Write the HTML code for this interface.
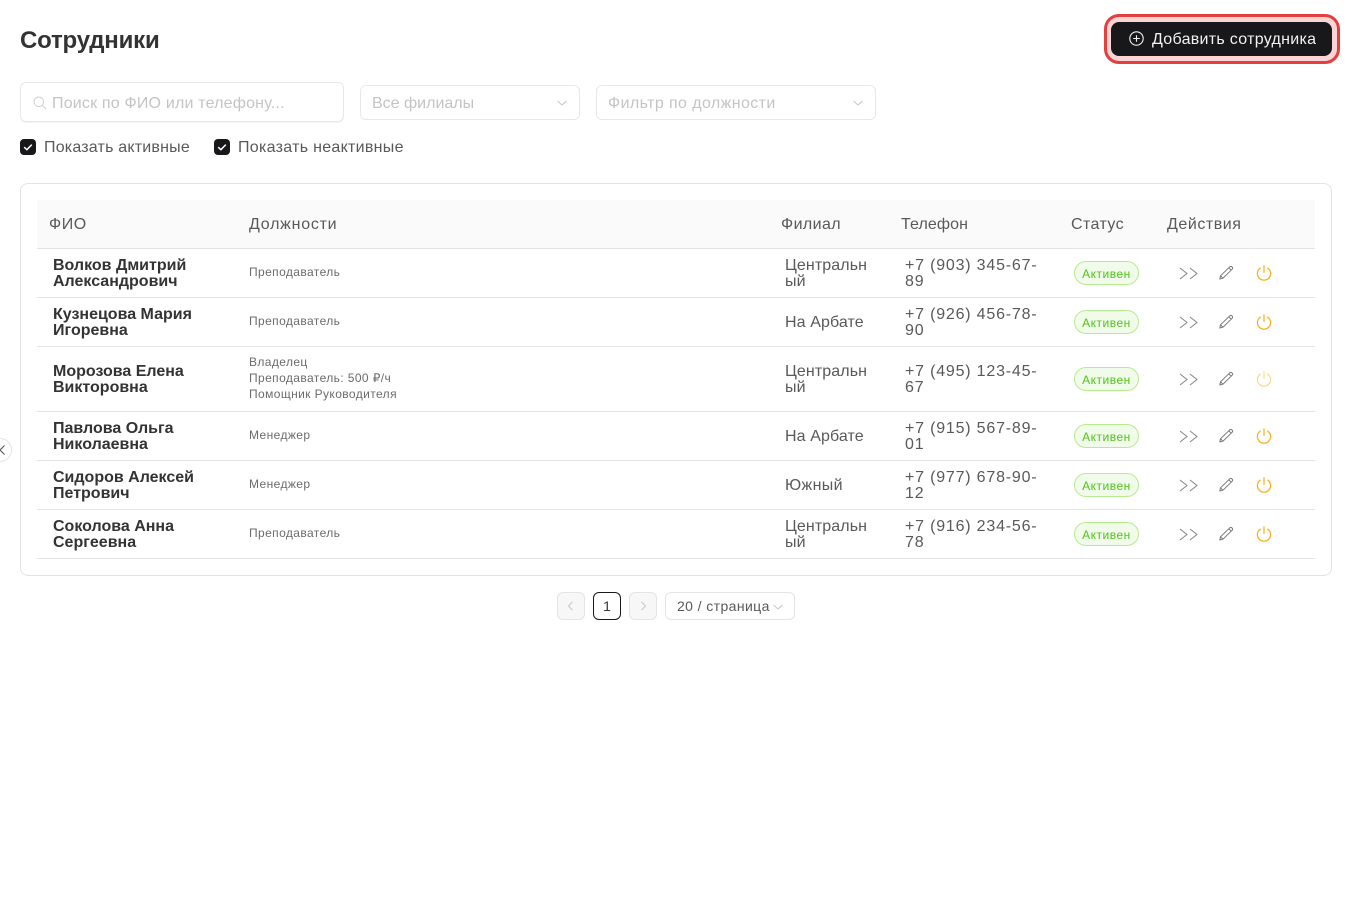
<!DOCTYPE html>
<html lang="ru"><head><meta charset="utf-8"><title>Сотрудники</title>
<style>
html,body{margin:0;padding:0;background:#fff;width:1352px;height:900px;overflow:hidden;font-family:"Liberation Sans","Noto Sans CJK SC",sans-serif}
.t{position:absolute;white-space:nowrap;line-height:16px;font-size:16px;color:#595959;letter-spacing:.3px;transform:translateY(1px)}
.b{position:absolute;box-sizing:border-box}
.name{color:#333;font-weight:700;letter-spacing:0;font-size:16px}
.role{font-size:12px;color:#6b6b6b;letter-spacing:.4px}
.fil{letter-spacing:.1px}
.tel{letter-spacing:.8px}
.line{position:absolute;left:37px;width:1278px;height:1px;background:#e3e3e3}
.ph{color:#c4c4c4}
.tag{position:absolute;left:1074px;width:65px;height:24px;box-sizing:border-box;border:1px solid #b7eb8f;background:#f0fbe9;border-radius:12px;color:#52c41a;font-size:12px;line-height:24px;text-align:center;letter-spacing:.5px}
svg{position:absolute;overflow:visible}
</style></head><body>
<svg width="0" height="0" style="position:absolute"><defs>
<symbol id="fw" viewBox="0 0 20 14"><path d="M2 1 9 6.500 2 12M12 1 19 6.500 12 12" fill="none" stroke="#858585" stroke-width="1"/></symbol>
<symbol id="ed" viewBox="0 0 16 16"><path d="M.8 14 1.500 10.800 10.800 1.800Q11.800 1 12.800 1.800L13.400 2.400Q14 3.400 13.200 4.200L4 13.200ZM1.500 10.800 4 13.200M9.800 2.800 12.300 5.200" fill="none" stroke="#777" stroke-width="1" stroke-linejoin="round"/></symbol>
<symbol id="pw" viewBox="0 0 16 16"><path d="M4.300 3.100A6.600 6.600 0 1 0 11.700 3.100M8 .8V7.400" fill="none" stroke="currentColor" stroke-width="1.200" stroke-linecap="round"/></symbol>
<symbol id="chk" viewBox="0 0 16 16"><rect width="16" height="16" rx="4" fill="#18181b"/><path d="M4.200 8.200 6.900 10.700 11.800 5.600" fill="none" stroke="#fff" stroke-width="1.500"/></symbol>
<symbol id="dn" viewBox="0 0 12 8"><path d="M1.500 2 6 6 10.500 2" fill="none" stroke="#c4c4c4" stroke-width="1"/></symbol>
</defs></svg>

<div class="t" style="left:20px;top:26px;font-size:24px;line-height:28px;font-weight:700;color:#333;letter-spacing:-.2px">Сотрудники</div>

<div class="b" style="left:1104px;top:14px;width:236px;height:50px;border:3px solid #e53e3e;border-radius:15px;background:#fbd5d5"></div>
<div class="b" style="left:1111px;top:22px;width:221px;height:34px;border-radius:8px;background:#18181b"></div>
<svg style="left:1129px;top:31px" width="15" height="15" viewBox="0 0 15 15"><circle cx="7.500" cy="7.500" r="6.700" fill="none" stroke="#f2f2f2" stroke-width="1.100"/><path d="M7.500 4.200V10.800M4.200 7.500H10.800" stroke="#f2f2f2" stroke-width="1.100"/></svg>
<div class="t" style="left:1152px;top:31px;color:#f2f2f2;letter-spacing:.29px">Добавить сотрудника</div>

<div class="b" style="left:20px;top:82px;width:324px;height:40px;border:1px solid #e8e8e8;border-radius:6px;box-shadow:0 1px 0 #f4f4f4"></div>
<svg style="left:33px;top:96px" width="14" height="14" viewBox="0 0 14 14"><circle cx="5.800" cy="5.800" r="4.800" fill="none" stroke="#cfcfcf" stroke-width="1"/><path d="M9.300 9.300 13 13" stroke="#cfcfcf" stroke-width="1"/></svg>
<div class="t ph" style="left:52px;top:95px;letter-spacing:.19px">Поиск по ФИО или телефону...</div>

<div class="b" style="left:360px;top:85px;width:220px;height:35px;border:1px solid #e8e8e8;border-radius:6px"></div>
<div class="t ph" style="left:372px;top:95px;letter-spacing:0">Все филиалы</div>
<svg style="left:556px;top:99px" width="12" height="8"><use href="#dn"/></svg>

<div class="b" style="left:596px;top:85px;width:280px;height:35px;border:1px solid #e8e8e8;border-radius:6px"></div>
<div class="t ph" style="left:608px;top:95px;letter-spacing:.4px">Фильтр по должности</div>
<svg style="left:852px;top:99px" width="12" height="8"><use href="#dn"/></svg>

<svg style="left:20px;top:139px" width="16" height="16"><use href="#chk"/></svg>
<div class="t" style="left:44px;top:139px;letter-spacing:.2px">Показать активные</div>
<svg style="left:214px;top:139px" width="16" height="16"><use href="#chk"/></svg>
<div class="t" style="left:238px;top:139px;letter-spacing:.29px">Показать неактивные</div>

<div class="b" style="left:20px;top:183px;width:1312px;height:393px;border:1px solid #e3e3e3;border-radius:8px"></div>
<div class="b" style="left:37px;top:200px;width:1278px;height:48px;background:#fafafa"></div>
<div class="t" style="left:49px;top:216px;letter-spacing:.55px">ФИО</div>
<div class="t" style="left:249px;top:216px;letter-spacing:.75px">Должности</div>
<div class="t" style="left:781px;top:216px;letter-spacing:.4px">Филиал</div>
<div class="t" style="left:901px;top:216px;letter-spacing:.1px">Телефон</div>
<div class="t" style="left:1071px;top:216px;letter-spacing:.4px">Статус</div>
<div class="t" style="left:1167px;top:216px;letter-spacing:.55px">Действия</div>
<div class="line" style="top:248px"></div><div class="line" style="top:297px"></div><div class="line" style="top:346px"></div><div class="line" style="top:411px"></div><div class="line" style="top:460px"></div><div class="line" style="top:509px"></div><div class="line" style="top:558px"></div>

<!-- row 1 -->
<div class="t name" style="left:53px;top:257px">Волков Дмитрий<br>Александрович</div>
<div class="t role" style="left:249px;top:263px">Преподаватель</div>
<div class="t fil" style="left:785px;top:257px">Центральн<br>ый</div>
<div class="t tel" style="left:905px;top:257px">+7 (903) 345-67-<br>89</div>
<div class="tag" style="top:261px">Активен</div>
<svg style="left:1178px;top:267px" width="20" height="14"><use href="#fw"/></svg><svg style="left:1219px;top:265px" width="16" height="16"><use href="#ed"/></svg><svg style="left:1256px;top:265px;color:#faad14" width="16" height="16"><use href="#pw"/></svg>

<!-- row 2 -->
<div class="t name" style="left:53px;top:306px">Кузнецова Мария<br>Игоревна</div>
<div class="t role" style="left:249px;top:312px">Преподаватель</div>
<div class="t fil" style="left:785px;top:314px">На Арбате</div>
<div class="t tel" style="left:905px;top:306px">+7 (926) 456-78-<br>90</div>
<div class="tag" style="top:310px">Активен</div>
<svg style="left:1178px;top:316px" width="20" height="14"><use href="#fw"/></svg><svg style="left:1219px;top:314px" width="16" height="16"><use href="#ed"/></svg><svg style="left:1256px;top:314px;color:#faad14" width="16" height="16"><use href="#pw"/></svg>

<!-- row 3 -->
<div class="t name" style="left:53px;top:363px">Морозова Елена<br>Викторовна</div>
<div class="t role" style="left:249px;top:353px">Владелец<br>Преподаватель: 500 ₽/ч<br>Помощник Руководителя</div>
<div class="t fil" style="left:785px;top:363px">Центральн<br>ый</div>
<div class="t tel" style="left:905px;top:363px">+7 (495) 123-45-<br>67</div>
<div class="tag" style="top:367px">Активен</div>
<svg style="left:1178px;top:373px" width="20" height="14"><use href="#fw"/></svg><svg style="left:1219px;top:371px" width="16" height="16"><use href="#ed"/></svg><svg style="left:1256px;top:371px;color:#fdd58a" width="16" height="16"><use href="#pw"/></svg>

<!-- row 4 -->
<div class="t name" style="left:53px;top:420px">Павлова Ольга<br>Николаевна</div>
<div class="t role" style="left:249px;top:426px">Менеджер</div>
<div class="t fil" style="left:785px;top:428px">На Арбате</div>
<div class="t tel" style="left:905px;top:420px">+7 (915) 567-89-<br>01</div>
<div class="tag" style="top:424px">Активен</div>
<svg style="left:1178px;top:430px" width="20" height="14"><use href="#fw"/></svg><svg style="left:1219px;top:428px" width="16" height="16"><use href="#ed"/></svg><svg style="left:1256px;top:428px;color:#faad14" width="16" height="16"><use href="#pw"/></svg>

<!-- row 5 -->
<div class="t name" style="left:53px;top:469px">Сидоров Алексей<br>Петрович</div>
<div class="t role" style="left:249px;top:475px">Менеджер</div>
<div class="t" style="left:785px;top:477px;letter-spacing:.35px">Южный</div>
<div class="t tel" style="left:905px;top:469px">+7 (977) 678-90-<br>12</div>
<div class="tag" style="top:473px">Активен</div>
<svg style="left:1178px;top:479px" width="20" height="14"><use href="#fw"/></svg><svg style="left:1219px;top:477px" width="16" height="16"><use href="#ed"/></svg><svg style="left:1256px;top:477px;color:#faad14" width="16" height="16"><use href="#pw"/></svg>

<!-- row 6 -->
<div class="t name" style="left:53px;top:518px">Соколова Анна<br>Сергеевна</div>
<div class="t role" style="left:249px;top:524px">Преподаватель</div>
<div class="t fil" style="left:785px;top:518px">Центральн<br>ый</div>
<div class="t tel" style="left:905px;top:518px">+7 (916) 234-56-<br>78</div>
<div class="tag" style="top:522px">Активен</div>
<svg style="left:1178px;top:528px" width="20" height="14"><use href="#fw"/></svg><svg style="left:1219px;top:526px" width="16" height="16"><use href="#ed"/></svg><svg style="left:1256px;top:526px;color:#faad14" width="16" height="16"><use href="#pw"/></svg>

<!-- sider toggle -->
<div class="b" style="left:-12px;top:438px;width:24px;height:24px;border-radius:50%;border:1px solid #e3e3e3;background:#fff"></div>
<svg style="left:0;top:445px" width="8" height="10" viewBox="0 0 8 10"><path d="M4.500 .5 0 5 4.500 9.500" fill="none" stroke="#555" stroke-width="1.100"/></svg>

<!-- pagination -->
<div class="b" style="left:557px;top:592px;width:28px;height:28px;border:1px solid #e4e4e4;border-radius:6px;background:#f7f7f8"></div>
<svg style="left:567px;top:601px" width="7" height="10" viewBox="0 0 7 10"><path d="M5.500 .8 1.500 5 5.500 9.200" fill="none" stroke="#c4c4c4" stroke-width="1"/></svg>
<div class="b" style="left:593px;top:592px;width:28px;height:28px;border:1px solid #18181b;border-radius:6px"></div>
<div class="t" style="left:593px;top:597px;width:28px;text-align:center;font-size:14px;color:#333;letter-spacing:0">1</div>
<div class="b" style="left:629px;top:592px;width:28px;height:28px;border:1px solid #e4e4e4;border-radius:6px;background:#f7f7f8"></div>
<svg style="left:640px;top:601px" width="7" height="10" viewBox="0 0 7 10"><path d="M1.500 .8 5.500 5 1.500 9.200" fill="none" stroke="#c4c4c4" stroke-width="1"/></svg>
<div class="b" style="left:665px;top:592px;width:130px;height:28px;border:1px solid #e4e4e4;border-radius:6px"></div>
<div class="t" style="left:677px;top:597px;font-size:14px;letter-spacing:.4px">20 / страница</div>
<svg style="left:772px;top:603px" width="12" height="8"><use href="#dn"/></svg>
</body></html>
